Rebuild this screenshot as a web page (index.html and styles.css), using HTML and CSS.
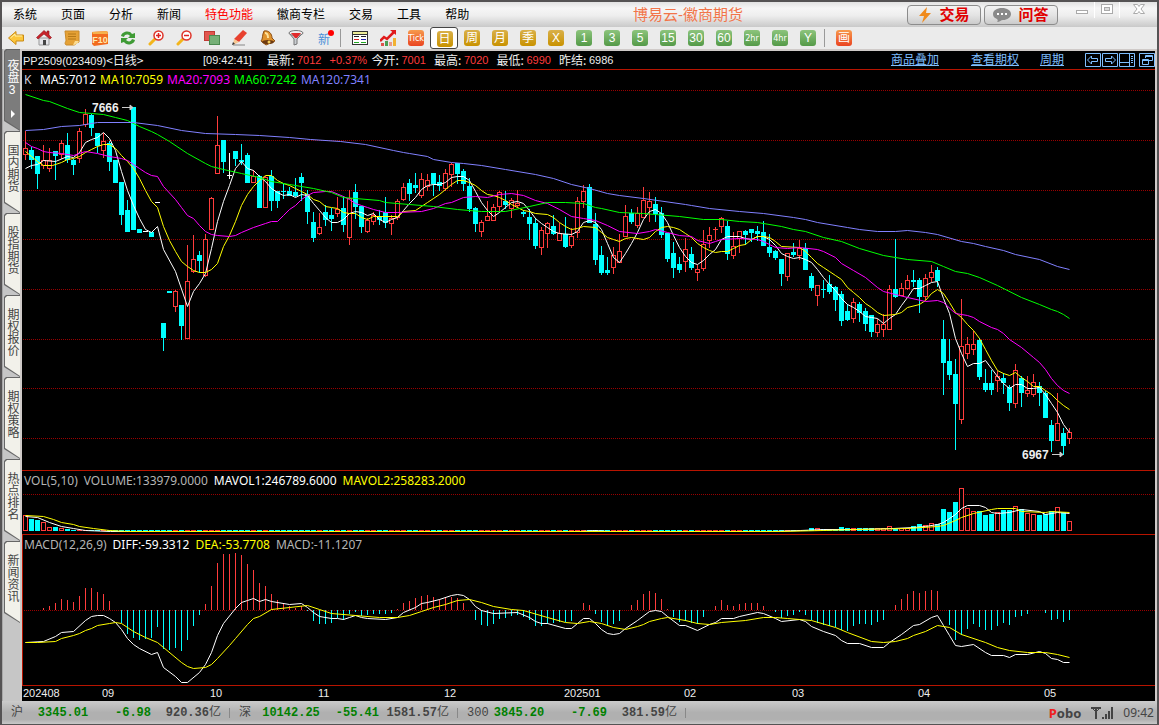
FILE: index.html
```html
<!DOCTYPE html>
<html lang="zh-CN">
<head>
    <meta charset="UTF-8">
    <title>博易云-徽商期货</title>
    <link rel="stylesheet" href="styles.css">
</head>
<body>
<div class="window">

    <header class="titlebar">
        <nav class="menu">
            <button>系统</button>
            <button>页面</button>
            <button>分析</button>
            <button>新闻</button>
            <button class="hot">特色功能</button>
            <button>徽商专栏</button>
            <button>交易</button>
            <button>工具</button>
            <button>帮助</button>
        </nav>
        <h1 class="app-title">博易云-徽商期货</h1>
        <div class="title-actions">
            <button class="action">
                <svg width="14" height="16" viewBox="0 0 14 16"><path d="M9 0L1 9h5L4 16l9-10H8z" fill="#f08a1c"/></svg>
                交易
            </button>
            <button class="action">
                <svg width="18" height="14" viewBox="0 0 18 14"><path d="M9 0c5 0 9 2.500 9 6s-4 6-8 6c-2 0-3 2-6 2 1-1 1-2 0-3C1 10 0 8 0 6c0-3.500 4-6 9-6z" fill="#8a8a8a"/><g fill="#fff"><rect x="4" y="5" width="2" height="2"/><rect x="8" y="5" width="2" height="2"/><rect x="12" y="5" width="2" height="2"/></g></svg>
                问答
            </button>
        </div>
        <div class="win-controls">
            <button aria-label="最小化"><svg width="14" height="14" viewBox="0 0 14 14"><rect x="1.500" y="8.500" width="11" height="3" fill="#fff" stroke="#aaa"/></svg></button>
            <button aria-label="最大化"><svg width="14" height="14" viewBox="0 0 14 14"><rect x="1.500" y="2.500" width="11" height="9" fill="#fff" stroke="#aaa"/><rect x="4.500" y="5.500" width="5" height="3" fill="#ddd" stroke="#aaa"/></svg></button>
            <button aria-label="关闭"><svg width="14" height="14" viewBox="0 0 14 14"><path d="M1.500 2.500h4L7 4.500l1.500-2h4L9 7l3.500 4.500h-4L7 9.500l-1.500 2h-4L5 7z" fill="#fff" stroke="#aaa"/></svg></button>
        </div>
    </header>

    <div class="toolbar">
        <button aria-label="后退"><svg width="16" height="16" viewBox="0 0 16 16"><path d="M.5 8L8 1.500V5h7.500v6H8v3.500z" fill="#fbc63c" stroke="#c98a14"/><path d="M2.500 8L7 4v2h7" fill="none" stroke="#fff0a8"/></svg></button>
        <button aria-label="首页"><svg width="16" height="16" viewBox="0 0 16 16"><path d="M3 8h10v7H3z" fill="#e4e4e8" stroke="#999"/><path d="M8 .5L.5 7.500 2 9l6-5 6 5 1.500-1.500L13 5V1h-2v2z" fill="#c9242c" stroke="#8d1218" stroke-width=".6"/><path d="M7 10h3v5H7z" fill="#444"/></svg></button>
        <button aria-label="公告"><svg width="16" height="16" viewBox="0 0 16 16"><path d="M1 1h14v11c-2 0-3 3-5 3H2c-2-2 0-3 0-5z" fill="#e5a135" stroke="#c98a2a"/><path d="M4 4h8M4 6.500h8M4 9h8" stroke="#b47818"/><path d="M15 11c-1 2-3 4-6 4l2-4z" fill="#fbdc92"/></svg></button>
        <button aria-label="F10"><svg width="16" height="16" viewBox="0 0 16 16"><path d="M0 2l15-1 1 2v11l-14 2-2-2z" fill="#f26a1e"/><path d="M0 2l15-1 1 3H1z" fill="#f6b14c"/><text x="8" y="13" font-size="9" font-weight="bold" text-anchor="middle" fill="#ffe9b0">F10</text></svg></button>
        <button aria-label="刷新"><svg width="16" height="16" viewBox="0 0 16 16"><path d="M1 6c1-5 9-6 11-2l3-1v5H8l2-2C8 4 5 4 4 7zM15 10c-1 5-9 6-11 2l-3 1V8h7l-2 2c2 2 5 2 6-1z" fill="#3f9b35"/></svg></button>
        <button aria-label="放大"><svg width="16" height="16" viewBox="0 0 16 16"><path d="M2 14l5-5" stroke="#f3b51b" stroke-width="3" stroke-linecap="round"/><circle cx="10.500" cy="5.500" r="4.500" fill="#fff" stroke="#de3328" stroke-width="1.500"/><path d="M8 5.500h5M10.500 3v5" stroke="#d22" stroke-width="1.500"/></svg></button>
        <button aria-label="缩小"><svg width="16" height="16" viewBox="0 0 16 16"><path d="M2 14l5-5" stroke="#f3b51b" stroke-width="3" stroke-linecap="round"/><circle cx="10.500" cy="5.500" r="4.500" fill="#fff" stroke="#de3328" stroke-width="1.500"/><path d="M8 5.500h5" stroke="#d22" stroke-width="1.500"/></svg></button>
        <button aria-label="叠加"><svg width="16" height="16" viewBox="0 0 16 16"><rect x=".5" y="1.500" width="10" height="9" fill="#e2564e" stroke="#c03a34"/><rect x="5.500" y="5.500" width="10" height="9" fill="#76b077" stroke="#4b8a50"/></svg></button>
        <button aria-label="画线"><svg width="16" height="16" viewBox="0 0 16 16"><path d="M1 15h12" stroke="#b9b9b9" stroke-width="2"/><path d="M11 0l4 3-8 9-5-3z" fill="#e8412f"/><path d="M2 9l5 3-6 3z" fill="#f7c792"/><path d="M0 15l3-1-2-2z" fill="#333"/></svg></button>
        <button aria-label="预警"><svg width="16" height="16" viewBox="0 0 16 16"><path d="M4 1c5-1 8 3 8 7l3 3-9 4-5-4c2-2 1-6 3-10z" fill="#e0932e" stroke="#8c4e12"/><path d="M5 3c2 0 3 2 3 5" stroke="#ffe29a" stroke-width="2" fill="none"/><ellipse cx="8" cy="12" rx="6" ry="2" fill="#6d3a10"/><circle cx="9" cy="12" r="1.500" fill="#f6cf5b"/></svg></button>
        <button aria-label="筛选"><svg width="16" height="16" viewBox="0 0 16 16"><path d="M1 3l5 6v6l3-1V9l6-6z" fill="#c9cdd1" stroke="#777"/><ellipse cx="8" cy="3" rx="7" ry="2.500" fill="#eee" stroke="#777"/><path d="M3 3h10L9 8H7z" fill="#e22b2b"/></svg></button>
        <button class="tool-new" aria-label="新">新</button>
        <span class="sep"></span>
        <button aria-label="报价"><svg width="16" height="16" viewBox="0 0 16 16" shape-rendering="crispEdges"><rect x=".5" y="1.500" width="15" height="13" fill="#fff" stroke="#333"/><path d="M1 3h14" stroke="#ee9" stroke-width="2"/><path d="M0 4.500h16" stroke="#333"/><path d="M2 6.500h5M9 6.500h5" stroke="#222"/><path d="M2 9.500h5" stroke="#d22"/><path d="M9 9.500h5" stroke="#22a"/><path d="M2 12.500h5M9 12.500h5" stroke="#2a2"/></svg></button>
        <button aria-label="分时"><svg width="16" height="16" viewBox="0 0 16 16"><path d="M1 13h3v3H1z" fill="#e0524d"/><path d="M5 11h3v5H5z" fill="#4d9e54"/><path d="M9 12h3v4H9z" fill="#e89a8a"/><path d="M13 8h3v8h-3z" fill="#f2b233"/><path d="M0 11l4-4 3 2 7-7" fill="none" stroke="#e01b1b" stroke-width="2.500"/><path d="M10 0h6v5z" fill="#e01b1b"/></svg></button>
        <button><span class="chip red small">Tick</span></button>
        <button class="selected"><span class="chip gold">日</span></button>
        <button><span class="chip gold">周</span></button>
        <button><span class="chip gold">月</span></button>
        <button><span class="chip gold">季</span></button>
        <button><span class="chip gold">X</span></button>
        <button><span class="chip green">1</span></button>
        <button><span class="chip green">3</span></button>
        <button><span class="chip green">5</span></button>
        <button><span class="chip green">15</span></button>
        <button><span class="chip green">30</span></button>
        <button><span class="chip green">60</span></button>
        <button><span class="chip green small">2hr</span></button>
        <button><span class="chip green small">4hr</span></button>
        <button><span class="chip green">Y</span></button>
        <span class="sep"></span>
        <button><span class="chip red">画</span></button>
    </div>

    <main class="workspace">
        <nav class="side-tabs">
            <button class="side-tab active">夜盘<span>3</span><i class="arrow"></i></button>
            <button class="side-tab">国内期货</button>
            <button class="side-tab">股指期货</button>
            <button class="side-tab">期权报价</button>
            <button class="side-tab">期权策略</button>
            <button class="side-tab">热点排名</button>
            <button class="side-tab">新闻资讯</button>
        </nav>

        <section class="chart">
            <div class="quote">
                <span class="code">PP2509(023409)<span class="cn">&lt;日线&gt;</span></span>
                <span class="time">[09:42:41]</span>
                <span class="item"><span class="cn">最新:</span><b>7012</b></span>
                <b class="pct">+0.37%</b>
                <span class="item"><span class="cn">今开:</span><b>7001</b></span>
                <span class="item"><span class="cn">最高:</span><b>7020</b></span>
                <span class="item"><span class="cn">最低:</span><b>6990</b></span>
                <span class="item"><span class="cn">昨结:</span>6986</span>
                <div class="links">
                    <a href="#">商品叠加</a>
                    <a href="#">查看期权</a>
                    <a href="#">周期</a>
                    <div class="pager">
                        <button aria-label="上一个"><svg width="16" height="14" viewBox="0 0 16 14"><path d="M.5.5h15v13H.5z M2.500 7l4-4v2.500h6v3h-6V11z"/></svg></button>
                        <button aria-label="下一个"><svg width="16" height="14" viewBox="0 0 16 14"><path d="M.5.5h15v13H.5z M13.500 7l-4-4v2.500h-6v3h6V11z"/></svg></button>
                        <button aria-label="侧栏"><svg width="16" height="14" viewBox="0 0 16 14"><path d="M.5.500h15v13H.5z M10.500 1v12 M1 9.500h9 M12 3.500h2 M12 5.500h2 M12 7.500h2 M12 9.500h2"/></svg></button>
                    </div>
                    <button aria-label="还原"><svg width="16" height="14" viewBox="0 0 16 14"><path d="M.5.500h15v13H.5z M6.500 5V2.500h7v5H10 M6.500 3.500h7 M3.500 6.500h6v5h-6z M3.500 7.500h6"/></svg></button>
                </div>
            </div>

            <div class="pane">
                <div class="legend">
                    <span class="k">K</span>
                    <span class="white">MA5:7012</span>
                    <span class="yellow">MA10:7059</span>
                    <span class="magenta">MA20:7093</span>
                    <span class="lime">MA60:7242</span>
                    <span class="violet">MA120:7341</span>
                </div>
                <svg id="price" class="plot plot-price"></svg>
            </div>

            <div class="pane">
                <div class="legend short">
                    <span>VOL(5,10)</span>
                    <span>VOLUME:133979.0000</span>
                    <span class="white">MAVOL1:246789.6000</span>
                    <span class="yellow">MAVOL2:258283.2000</span>
                </div>
                <svg id="volume" class="plot plot-volume"></svg>
            </div>

            <div class="pane pane-macd">
                <div class="legend short">
                    <span>MACD(12,26,9)</span>
                    <span class="white">DIFF:-59.3312</span>
                    <span class="yellow">DEA:-53.7708</span>
                    <span>MACD:-11.1207</span>
                </div>
                <svg id="macd" class="plot plot-macd"></svg>
            </div>

            <svg id="axis" class="plot plot-axis"></svg>
        </section>
    </main>

    <footer class="status">
        <div class="index"><span class="name">沪</span><b>3345.01</b><b class="chg">-6.98</b><span class="amt">920.36<span class="cn">亿</span></span></div>
        <div class="index"><span class="name">深</span><b>10142.25</b><b class="chg">-55.41</b><span class="amt">1581.57<span class="cn">亿</span></span></div>
        <div class="index"><span class="name">300</span><b>3845.20</b><b class="chg">-7.69</b><span class="amt">381.59<span class="cn">亿</span></span></div>
        <div class="status-right">
            <span class="brand"><em>P</em>obo</span>
            <svg width="22" height="14" viewBox="0 0 22 14" shape-rendering="crispEdges"><path d="M0 1.500h10M5 1v12" stroke="#444" stroke-width="2"/><path d="M1 2l4 4 4-4" fill="none" stroke="#444"/><path d="M11 11h2v2h-2zM14 8h2v5h-2zM17 5h2v8h-2zM20 1h2v12h-2z" fill="#444"/></svg>
            <span class="clock">09:42</span>
        </div>
    </footer>

</div>
<script src="chart.js"></script>
</body>
</html>
```
FILE: styles.css
```css
* {
    box-sizing: border-box;
}

body {
    margin: 0;
    background: #c8c8c8;
    font-family: "Liberation Sans", "Noto Sans CJK SC", sans-serif;
    font-size: 12px;
    color: #000;
}

button {
    margin: 0;
    padding: 0;
    border: 0;
    background: none;
    color: inherit;
    font-family: inherit;
    font-size: 12px;
    cursor: pointer;
}

svg {
    display: block;
}

.window {
    min-height: 100vh;
    display: flex;
    flex-direction: column;
    border: 2px solid #555354;
    border-bottom-width: 1px;
    background: #c8c8c8;
}

/* title bar */
.titlebar {
    display: flex;
    align-items: center;
    height: 25px;
    padding-left: 11px;
    background: linear-gradient(#e2e2e2, #f6f6f6 25%, #eee 55%, #c9c9c9);
}

.menu {
    display: flex;
    gap: 24px;
}

.menu button {
    white-space: nowrap;
    line-height: 24px;
}

.menu .hot {
    color: #f00;
}

.app-title {
    flex: 1;
    margin: 0;
    font-size: 15px;
    font-weight: normal;
    line-height: 24px;
    text-align: center;
    color: #f2754a;
}

.title-actions {
    display: flex;
    gap: 3px;
}

.action {
    display: flex;
    align-items: center;
    justify-content: center;
    gap: 7px;
    width: 74px;
    height: 20px;
    border: 1px solid #8c8c8c;
    border-radius: 4px;
    background: linear-gradient(#f2f2f2, #e4e4e4 50%, #cbcbcb);
    font-size: 15px;
    font-weight: bold;
    line-height: 18px;
    color: #e00000;
}

.win-controls {
    display: flex;
    align-self: flex-start;
    margin-left: 12px;
    margin-right: 5px;
}

.win-controls button {
    display: flex;
    justify-content: center;
    width: 25px;
    height: 16px;
    border-right: 1px solid #fff;
}

.win-controls button:last-child {
    width: 32px;
    border-right: 0;
    padding-left: 5px;
}

/* toolbar */
.toolbar {
    display: flex;
    height: 24px;
    background: #ebebeb;
    border-bottom: 2px solid #cfcac8;
}

.toolbar button {
    display: flex;
    align-items: center;
    justify-content: center;
    width: 28px;
    height: 22px;
}

.toolbar text {
    font-family: "Liberation Sans", sans-serif;
}

.toolbar .sep {
    width: 1px;
    height: 18px;
    margin: 2px 5px 0 2px;
    background: #999;
}

.toolbar .tool-new {
    position: relative;
    color: #4a90d9;
}

.tool-new::after {
    content: "";
    position: absolute;
    top: 3px;
    right: 4px;
    width: 6px;
    height: 6px;
    border-radius: 50%;
    background: #f00;
}

.toolbar .selected {
    background: #fff;
    border: 1px solid #444;
    border-radius: 3px;
    padding: 1px 0 0 1px;
}

.chip {
    display: flex;
    justify-content: center;
    width: 16px;
    height: 16px;
    border-radius: 3px;
    color: #fff;
    font-size: 12px;
    line-height: 16px;
    overflow: hidden;
}

.chip.small {
    font-family: "DejaVu Sans Condensed", "Liberation Sans", sans-serif;
    font-size: 9px;
}

.chip.gold {
    background: linear-gradient(#d9b04a, #c99200);
}

.chip.green {
    background: linear-gradient(#8cc47c, #549a48);
}

.chip.red {
    background: linear-gradient(#f79a4c, #ea4420);
}

/* left tabs */
.workspace {
    flex: 1;
    display: flex;
}

.side-tabs {
    width: 20px;
    padding-left: 1px;
    border-left: 1px solid #a8a8a8;
    border-right: 2px solid #cfcac8;
    background: #c6c6c6;
    display: flex;
    flex-direction: column;
    margin-top: -2px;
}

.side-tab {
    position: relative;
    z-index: 0;
    width: 16px;
    height: 82px;
    padding: 13px 0 0;
    background: #666;
    clip-path: polygon(0 2px, 2px 0, 100% 0, 100% 82px, 0 72px);
    writing-mode: vertical-rl;
    text-orientation: upright;
    text-align: left;
    line-height: 16px;
    color: #444;
}

.side-tab::before {
    content: "";
    position: absolute;
    z-index: -1;
    inset: 1px 0 1px 1px;
    background: #f2f1ea;
    clip-path: polygon(0 2px, 2px 0, 100% 0, 100% 80px, 0 70px);
}

.side-tab.active {
    padding-top: 10px;
    color: #fff;
}

.side-tab.active::before {
    background: #7c7c7c;
}

.arrow {
    position: absolute;
    left: 7px;
    top: 61px;
    border: 4px solid transparent;
    border-left-color: #fff;
    border-right-width: 0;
}

/* chart area */
.chart {
    flex: 1;
    min-width: 0;
    background: #000;
    color: #eee;
    border-right: 2px solid #cfcac8;
}

.quote {
    display: flex;
    align-items: center;
    gap: 8px;
    height: 19px;
    padding-left: 1px;
    border-bottom: 1px solid #b81400;
    font-size: 11px;
    line-height: 18px;
    white-space: nowrap;
}

.quote .cn {
    font-family: "Noto Sans CJK SC", sans-serif;
    font-size: 12px;
}

.quote b {
    font-weight: normal;
    color: #ff3c3c;
}

.quote .code {
    width: 172px;
}

.quote .time {
    width: 56px;
}

.quote .item {
    display: flex;
}

.quote .item .cn {
    width: 30px;
}

.quote .pct {
    width: 34px;
}

.links {
    flex: 1;
    display: flex;
    justify-content: flex-end;
    align-items: center;
    color: #7fbfff;
}

.links a {
    margin-right: 21px;
    font-size: 12px;
    color: #7fbfff;
    text-decoration: underline;
}

.links a:first-child {
    margin-right: 32px;
}

.links path {
    fill: none;
    stroke: #7fbfff;
}

.pager {
    display: flex;
    gap: 1px;
    margin-right: 4px;
}

.pane {
    border-bottom: 1px solid #b81400;
}

.pane-macd {
    border-left: 1px solid #b81400;
}

.legend {
    display: flex;
    gap: 4px;
    height: 20px;
    padding-left: 2px;
    font-family: "Noto Sans", sans-serif;
    font-size: 12px;
    line-height: 20px;
    white-space: nowrap;
    color: #b4b4b4;
}

.legend.short {
    gap: 6px;
    height: 17px;
}

.pane-macd .legend {
    padding-left: 1px;
}

.legend .k {
    width: 12px;
    color: #ccd;
}

.white { color: #fff; }
.yellow { color: #ff0; }
.magenta { color: #f0f; }
.lime { color: #0f0; }
.violet { color: #8080ff; }

.plot {
    width: 100%;
    overflow: visible;
}

.plot-price { height: 380px; }
.plot-volume { height: 46px; }
.plot-macd { height: 133px; }
.plot-axis { height: 15px; }

.plot rect,
.plot .grid {
    shape-rendering: crispEdges;
}

.plot polyline {
    fill: none;
    stroke-width: 1;
}

.grid {
    stroke: #900;
    stroke-dasharray: 1 1;
}

.mark {
    font-size: 12px;
    font-weight: bold;
    fill: #eee;
}

.date {
    font-size: 11px;
    fill: #eee;
}

/* status bar */
.status {
    display: flex;
    height: 23px;
    background: linear-gradient(#cbcbcb, #b0b0b0 50%, #b0b0b0 80%, #c8c8c8);
    font-family: "Liberation Mono", "Noto Sans CJK SC", monospace;
    color: #444;
}

.index {
    position: relative;
    display: grid;
    grid-template-columns: 22px 60px 58px 70px;
    align-items: baseline;
    width: 228px;
    padding-left: 9px;
    line-height: 24px;
}

.index::after {
    content: "";
    position: absolute;
    right: 0;
    top: 7px;
    height: 10px;
    border-right: 1px solid #888;
}

.index b {
    text-align: center;
    color: #008000;
}

.index .chg {
    text-align: right;
}

.index .amt {
    text-align: right;
    white-space: nowrap;
    font-weight: bold;
}

.index .cn {
    font-weight: normal;
}

.status-right {
    flex: 1;
    display: flex;
    justify-content: flex-end;
    align-items: center;
    gap: 10px;
    padding-right: 3px;
    font-family: "Noto Sans", sans-serif;
}

.brand {
    font-size: 13px;
    font-weight: bold;
}

.brand em {
    font-style: normal;
    color: #f02020;
}

.clock {
    font-size: 12px;
}
```
FILE: chart.js
```javascript
const NS = 'http://www.w3.org/2000/svg';
const RED = '#ff3c3c';
const CYAN = '#00ffff';
const STEP = 6;

// type (r = up, c = down, w = flat), high, body top, body bottom, low
const candles = `
r 131 148 154 160, c 147 150 160 169, c 156 156 174 189, r 145 160 165 169, r 148 160 168 172,
c 151 151 156 180, r 140 143 154 159, c 133 145 160 163, c 159 160 165 175, r 128 131 158 163,
r 109 114 124 127, c 114 115 128 136, c 133 133 146 153, r 133 141 150 158, c 141 143 162 171,
c 160 160 183 183, c 182 182 215 225, c 200 210 232 232, c 107 107 230 230, c 229 229 233 233,
w 231 231 231 231, c 232 232 237 237, w 202 202 202 202, c 323 323 338 351, c 291 291 293 293,
r 290 291 306 312, c 305 305 326 340, r 245 281 338 338, r 235 259 271 273, c 251 255 261 273,
r 234 239 275 277, r 197 198 229 229, r 116 145 173 173, c 140 140 162 173, w 153 175 175 179,
c 151 151 159 166, c 144 160 162 165, c 153 155 183 183, r 170 176 182 183, c 175 176 208 208,
r 176 177 207 207, c 170 176 201 211, c 191 191 201 208, c 184 191 192 199, c 187 191 196 196,
c 178 192 196 197, c 173 177 183 201, c 190 194 212 224, c 212 222 238 242, r 213 227 233 235,
c 205 212 220 226, c 208 215 219 231, r 197 209 213 217, c 196 208 225 232, r 190 198 237 245,
c 184 192 207 219, c 206 206 227 233, r 218 220 231 233, r 212 215 221 225, c 210 216 220 225,
c 197 212 223 228, r 215 218 223 235, r 199 201 217 220, r 183 187 199 201, c 179 183 194 201,
c 173 185 188 193, r 173 179 195 198, r 174 180 186 191, c 173 173 184 196, c 175 182 186 191,
r 169 173 188 191, r 163 164 174 187, c 163 163 174 184, c 169 171 184 191, c 178 186 209 212,
c 207 208 224 232, r 220 222 231 237, r 201 216 220 221, r 204 207 220 220, r 191 192 206 211,
c 191 201 205 209, r 198 200 208 218, r 190 203 205 208, c 210 212 214 217, c 209 217 224 240,
c 218 223 246 249, r 227 230 247 255, r 222 223 233 248, c 215 226 234 235, r 223 233 240 240,
c 217 234 247 248, r 228 236 245 248, r 197 201 232 238, r 185 191 201 208, c 184 187 223 223,
c 213 224 260 265, c 246 255 273 275, c 257 270 273 275, r 247 255 267 274, r 234 251 262 262,
r 205 216 236 237, c 209 213 222 224, r 207 213 225 228, r 187 200 217 218, r 192 201 207 222,
c 197 204 214 222, c 207 213 235 238, c 233 233 259 262, c 242 253 268 278, c 257 264 270 273,
r 238 249 261 272, c 247 254 268 270, r 265 269 272 281, r 230 244 268 271, r 227 235 240 248,
r 227 229 229 240, r 217 218 226 233, c 221 226 254 260, r 232 246 255 259, r 231 231 238 253,
c 230 231 235 245, c 229 229 233 242, c 226 231 234 241, c 221 232 246 246, c 234 247 253 257,
c 250 251 258 260, c 259 259 274 286, r 253 253 276 281, c 243 252 255 257, r 240 248 255 260,
c 243 248 270 270, c 273 276 288 291, r 285 285 295 306, c 280 289 290 298, c 275 284 292 294,
c 286 287 300 311, c 291 294 321 326, c 304 311 320 321, r 298 302 318 323, c 302 304 313 322,
c 308 311 324 331, c 315 315 332 337, r 319 324 332 337, r 314 324 329 337, r 285 289 329 329,
c 239 289 297 298, r 283 288 295 296, r 275 280 288 290, c 270 280 282 287, c 278 280 297 313,
r 274 278 296 300, r 265 272 277 282, c 267 270 281 287, c 320 339 363 395, c 339 361 375 380,
c 359 374 404 450, r 299 346 419 424, r 337 344 353 359, r 331 344 349 355, c 338 340 377 380,
c 369 383 390 392, c 370 383 390 395, r 371 376 380 392, c 373 378 383 394, c 385 387 403 411,
r 364 370 403 408, c 376 378 393 407, r 376 390 393 397, r 374 382 394 397, c 382 386 393 406,
c 391 393 418 418, c 420 425 441 452, r 393 423 440 440, c 428 433 446 455, r 428 432 438 444
`.trim().split(',').map(row => {
    const p = row.trim().split(' ');
    return { type: p[0], high: +p[1], top: +p[2], bottom: +p[3], low: +p[4] };
});

const ma5 = '25,168 31,165 37,164 43,160 55,161 67,156 73,157 79,152 85,142 91,139 97,137 103,132 109,138 115,150 121,171 127,190 133,205 139,218 145,229 151,232 157,226 163,249 175,271 187,306 193,291 199,283 205,273 211,248 217,221 223,201 229,185 235,168 241,161 247,168 253,170 259,176 265,181 271,188 277,192 283,195 289,194 295,197 301,194 307,195 313,203 319,210 325,217 331,222 337,222 343,219 349,213 355,211 361,212 367,215 373,213 379,219 385,222 391,219 397,217 403,210 409,203 415,197 421,189 427,185 433,184 439,184 445,182 451,177 457,176 463,176 469,180 475,191 481,202 487,210 493,216 499,212 505,207 511,202 517,201 523,203 529,210 535,218 541,223 547,227 553,231 559,233 571,234 577,231 583,222 589,220 595,222 601,229 607,243 613,257 619,262 625,253 631,243 637,232 643,219 649,211 655,209 661,213 667,222 673,235 679,247 685,256 691,262 697,264 703,260 709,254 715,249 721,239 727,236 739,236 745,238 751,239 757,236 763,236 769,239 775,245 781,253 787,256 793,258 799,257 805,259 811,262 817,269 823,277 829,284 835,290 841,298 847,304 853,307 859,311 865,316 871,317 877,318 883,323 889,318 895,314 901,305 907,297 913,288 919,288 925,285 931,282 937,281 943,298 949,313 955,338 961,353 967,366 973,363 979,363 985,360 991,368 997,376 1003,383 1009,388 1015,384 1021,384 1027,388 1033,388 1039,387 1045,394 1051,403 1057,412 1063,424 1069,432';
const ma10 = '25,151 31,156 37,161 43,165 52,165 61,162 67,159 73,158 79,156 85,152 91,149 97,146 103,144 109,144 115,148 121,155 127,161 133,168 139,178 145,190 151,201 157,207 163,226 169,240 175,251 181,261 187,266 193,270 199,272 205,272 211,269 217,263 223,246 229,235 235,221 241,205 247,194 253,186 259,180 265,175 271,175 277,180 283,183 289,185 295,188 301,191 307,194 313,199 319,201 325,206 331,207 337,208 343,212 349,213 355,213 361,217 367,219 373,216 385,216 397,216 403,211 415,210 421,206 427,202 433,198 439,194 445,189 451,184 457,180 463,180 469,182 475,185 481,190 487,194 493,195 499,197 505,200 511,204 517,207 523,210 529,211 535,213 547,214 553,217 559,222 565,226 571,229 577,228 583,226 595,227 601,232 607,237 613,239 619,241 625,238 631,237 643,239 649,237 655,231 661,227 667,226 673,227 679,229 685,233 691,237 697,243 703,247 709,250 715,252 721,251 727,251 733,248 739,245 745,244 751,239 757,236 763,236 769,237 775,241 781,246 799,247 805,251 811,257 817,263 823,267 829,271 835,275 841,279 847,287 853,292 859,297 865,303 871,307 877,312 883,315 895,314 901,312 907,307 919,304 925,300 931,293 937,289 943,293 949,302 955,312 961,317 967,324 973,330 979,338 985,349 991,360 997,370 1003,373 1009,375 1015,372 1021,377 1027,381 1033,386 1039,386 1045,390 1051,394 1057,400 1063,405 1069,409';
const ma20 = '25,142 31,146 37,148 43,151 49,152 61,153 73,155 79,153 85,151 97,153 109,156 121,158 127,160 133,164 139,168 145,172 151,175 157,176 163,186 175,199 181,207 187,215 193,218 199,225 205,231 211,234 217,235 229,236 235,235 241,232 253,227 265,223 271,221 277,221 283,215 289,209 295,205 301,199 307,195 313,192 325,191 331,191 343,196 349,199 355,203 361,205 367,207 373,209 385,212 397,212 421,211 433,208 445,203 451,202 463,197 475,196 487,197 499,194 511,193 523,195 535,200 547,203 559,209 571,216 583,218 595,220 607,225 619,231 637,233 649,231 655,229 667,232 679,235 691,236 697,240 709,243 715,241 721,239 739,238 757,239 763,241 775,247 787,248 799,247 817,249 823,251 835,257 841,263 853,270 865,277 877,287 883,291 895,294 907,297 925,301 937,300 943,302 955,313 967,315 973,317 979,321 991,327 997,329 1003,333 1009,339 1021,347 1033,357 1039,362 1045,369 1051,378 1057,385 1063,390 1069,393';
const ma60 = '25,94 43,100 49,101 67,108 79,112 91,113 103,114 115,117 127,120 139,126 151,131 157,134 169,141 187,153 205,163 211,166 223,169 241,173 259,177 271,181 289,184 301,186 313,188 331,192 343,197 355,198 379,200 385,202 409,204 433,206 457,209 481,211 505,211 529,206 547,202 565,202 583,203 595,207 601,208 619,212 643,213 655,214 679,216 703,219 721,219 739,221 757,222 781,226 793,229 805,231 823,237 841,241 859,248 883,255 907,259 931,261 943,266 955,271 967,273 979,277 997,285 1021,297 1039,304 1051,309 1057,311 1063,314 1069,318';
const ma120 = '25,130 43,129 61,126 79,125 97,122 133,122 157,125 181,130 205,133 235,134 259,135 289,137 310,139 340,141 365,144 393,150 403,152 409,153 427,156 433,159 451,162 463,163 481,165 505,169 535,174 553,178 571,184 589,188 607,193 619,195 643,198 685,204 691,205 709,208 739,211 763,213 793,217 805,219 817,222 847,227 859,229 877,231 895,231 907,230 925,232 937,234 961,241 973,243 985,246 1003,250 1015,254 1039,259 1057,266 1069,269';

// bars outside these two ranges are one pixel tall
const volStart = [515, 519, 520, 522, 527, 527, 528, 529];
const volEnd = [528, 528, 529, 529, 529, 527, 528, 528, 528, 528, 528, 528, 528, 526, 528, 528, 528, 526, 524, 525, 523, 524, 509, 512, 502, 488, 508, 511, 511, 515, 514, 512, 510, 510, 506, 509, 513, 514, 515, 514, 511, 507, 512, 521];
const volEndIndex = 131;
const mavol1 = '25,516 37,517 49,522 61,526 73,528 85,530 110,531 580,531 594,530 610,531 770,531 800,530 823,529 853,529 893,528 913,527 925,526 937,524 943,522 949,518 955,514 961,508 967,505 979,505 985,507 991,512 997,513 1009,512 1021,509 1039,511 1045,514 1051,513 1057,512 1069,513';
const mavol2 = '25,515 43,516 53,519 61,522 73,524 79,526 93,528 109,530 127,531 780,531 823,530 857,529 907,528 937,526 943,525 955,520 961,517 973,513 991,509 997,508 1015,508 1021,511 1045,512 1051,511 1069,512';

const hist = [610, 610, 610, 608, 606, 603, 599, 600, 602, 596, 588, 588, 592, 594, 601, 610, 623, 634, 638, 640, 639, 638, 627, 649, 650, 648, 651, 640, 626, 615, 604, 586, 563, 554, 554, 553, 555, 564, 570, 583, 586, 594, 600, 604, 606, 608, 606, 611, 621, 624, 624, 623, 618, 620, 614, 612, 616, 615, 614, 614, 614, 613, 609, 603, 601, 598, 596, 595, 597, 599, 598, 597, 598, 603, 610, 620, 625, 626, 624, 619, 618, 616, 615, 617, 620, 626, 626, 624, 623, 622, 622, 621, 610, 603, 605, 614, 622, 625, 624, 621, 610, 605, 600, 594, 591, 593, 599, 609, 617, 622, 621, 623, 624, 617, 610, 606, 600, 605, 606, 604, 603, 603, 603, 606, 610, 612, 618, 616, 615, 612, 615, 620, 623, 625, 626, 627, 630, 631, 626, 624, 624, 625, 622, 620, 610, 605, 599, 594, 591, 593, 591, 590, 591, 610, 625, 640, 635, 629, 624, 627, 630, 630, 626, 623, 625, 617, 616, 614, 610, 610, 613, 620, 619, 622, 620];
const diff = '25,642 43,641 55,636 61,632 73,631 85,620 91,616 97,615 103,615 109,618 115,622 121,629 127,638 133,644 139,648 151,654 157,652 163,667 175,676 181,682 187,682 199,672 205,664 211,652 217,635 223,623 235,608 241,602 247,600 253,598 259,601 265,599 271,601 289,604 301,603 307,607 313,612 319,616 331,618 337,618 343,619 349,617 355,615 361,617 367,618 385,619 397,617 403,612 415,607 421,603 427,602 439,599 451,595 457,594 463,595 469,599 475,606 481,610 493,613 517,612 529,617 535,621 541,623 547,623 565,628 571,628 577,623 583,618 589,618 595,623 601,629 607,633 613,634 619,633 625,628 637,620 649,611 655,610 661,611 667,616 679,625 685,625 697,630 709,624 715,622 721,618 733,618 739,616 757,612 763,613 775,618 781,621 799,619 805,621 811,626 823,631 835,635 841,640 847,643 859,643 871,647 883,647 889,642 901,634 913,625 919,624 931,617 937,615 943,625 949,635 955,645 961,646 973,644 985,652 991,655 1003,655 1009,657 1015,654 1027,654 1039,651 1045,653 1051,658 1057,659 1063,662 1069,662';
const dea = '25,642 37,642 55,641 61,638 73,635 79,633 85,630 91,628 97,625 109,623 115,622 121,623 127,627 133,631 145,637 157,642 163,647 181,662 187,666 193,668 205,667 211,664 217,658 229,645 235,638 247,624 253,618 259,616 271,609 289,607 307,605 319,609 331,613 355,615 379,617 397,617 409,615 421,611 433,607 445,604 457,600 469,599 481,602 493,606 511,609 523,610 547,617 565,622 577,623 589,621 601,623 613,627 625,629 637,626 643,624 649,621 661,618 667,617 685,620 697,623 709,624 721,622 745,620 763,617 775,617 787,618 799,619 811,620 835,627 847,632 871,641 883,642 895,641 907,638 913,635 925,631 937,625 949,627 961,634 985,642 997,647 1009,650 1027,652 1045,652 1057,654 1069,657';

function el(parent, name, attrs, text) {
    const node = document.createElementNS(NS, name);
    for (const key in attrs) node.setAttribute(key, attrs[key]);
    if (text) node.textContent = text;
    parent.appendChild(node);
    return node;
}

// each pane shares the same x origin and has its own y origin
function pane(id, left, top) {
    const svg = document.getElementById(id);
    return { svg, g: el(svg, 'g', { transform: `translate(${-left} ${-top})` }), top };
}

function grid(p, y) {
    el(p.svg, 'line', { class: 'grid', x1: 1, x2: '100%', y1: y - p.top + 0.5, y2: y - p.top + 0.5 });
    p.svg.appendChild(p.g);
}

function bar(p, x, y, w, h, color) {
    el(p.g, 'rect', { x, y, width: w, height: h, fill: color });
}

function box(p, x, y, h) {
    el(p.g, 'rect', { x: x + 0.5, y: y + 0.5, width: 4, height: h, fill: '#000', stroke: RED });
}

function line(p, points, color) {
    el(p.g, 'polyline', { points, stroke: color, transform: 'translate(0.5 0.5)' });
}

function drawPrice() {
    const p = pane('price', 22, 90);
    [90, 140, 190, 239, 289, 339, 388, 438].forEach(y => grid(p, y));
    candles.forEach((c, i) => {
        const x = 23 + i * STEP;
        const color = c.type === 'r' ? RED : c.type === 'c' ? CYAN : '#fff';
        if (c.low > c.high) bar(p, x + 2, c.high, 1, c.low - c.high, color);
        if (c.type === 'c') bar(p, x, c.top, 5, c.bottom - c.top, color);
        else if (c.bottom === c.top) bar(p, x, c.top, 5, 1, color);
        else box(p, x, c.top, c.bottom - c.top);
    });
    line(p, ma5, '#fff');
    line(p, ma10, '#ff0');
    line(p, ma20, '#f0f');
    line(p, ma60, '#0f0');
    line(p, ma120, '#8080ff');
    el(p.g, 'text', { class: 'mark', x: 92, y: 112 }, '7666');
    el(p.g, 'text', { class: 'mark', x: 1022, y: 459 }, '6967');
    [[122, 107], [1052, 454]].forEach(([x, y]) => {
        el(p.g, 'path', { d: `M${x} ${y + 0.5}h10M${x + 8} ${y - 2}l3 2.500l-3 2.500z`, stroke: '#ccc', fill: '#ccc' });
    });
}

function drawVolume() {
    const p = pane('volume', 22, 488);
    grid(p, 494);
    candles.forEach((c, i) => {
        let y = 530;
        if (i < volStart.length) y = volStart[i];
        if (i >= volEndIndex) y = volEnd[i - volEndIndex];
        const x = 23 + i * STEP;
        if (c.type === 'r' && y < 529) box(p, x, y, 530 - y);
        else bar(p, x, y, 5, 531 - y, c.type === 'r' ? RED : CYAN);
    });
    line(p, mavol1, '#fff');
    line(p, mavol2, '#ff0');
}

function drawMacd() {
    const p = pane('macd', 23, 552);
    grid(p, 610);
    hist.forEach((y, i) => {
        const x = 25 + i * STEP;
        if (y < 610) bar(p, x, y, 1, 610 - y, RED);
        if (y > 610) bar(p, x, 610, 1, y - 610, CYAN);
    });
    line(p, diff, '#fff');
    line(p, dea, '#ff0');
}

function drawAxis() {
    const p = pane('axis', 22, 686);
    const dates = [[23, '202408'], [102, '09'], [210, '10'], [318, '11'], [444, '12'], [564, '202501'], [684, '02'], [792, '03'], [918, '04'], [1044, '05']];
    dates.forEach(([x, label]) => el(p.g, 'text', { class: 'date', x, y: 697 }, label));
}

drawPrice();
drawVolume();
drawMacd();
drawAxis();
```
